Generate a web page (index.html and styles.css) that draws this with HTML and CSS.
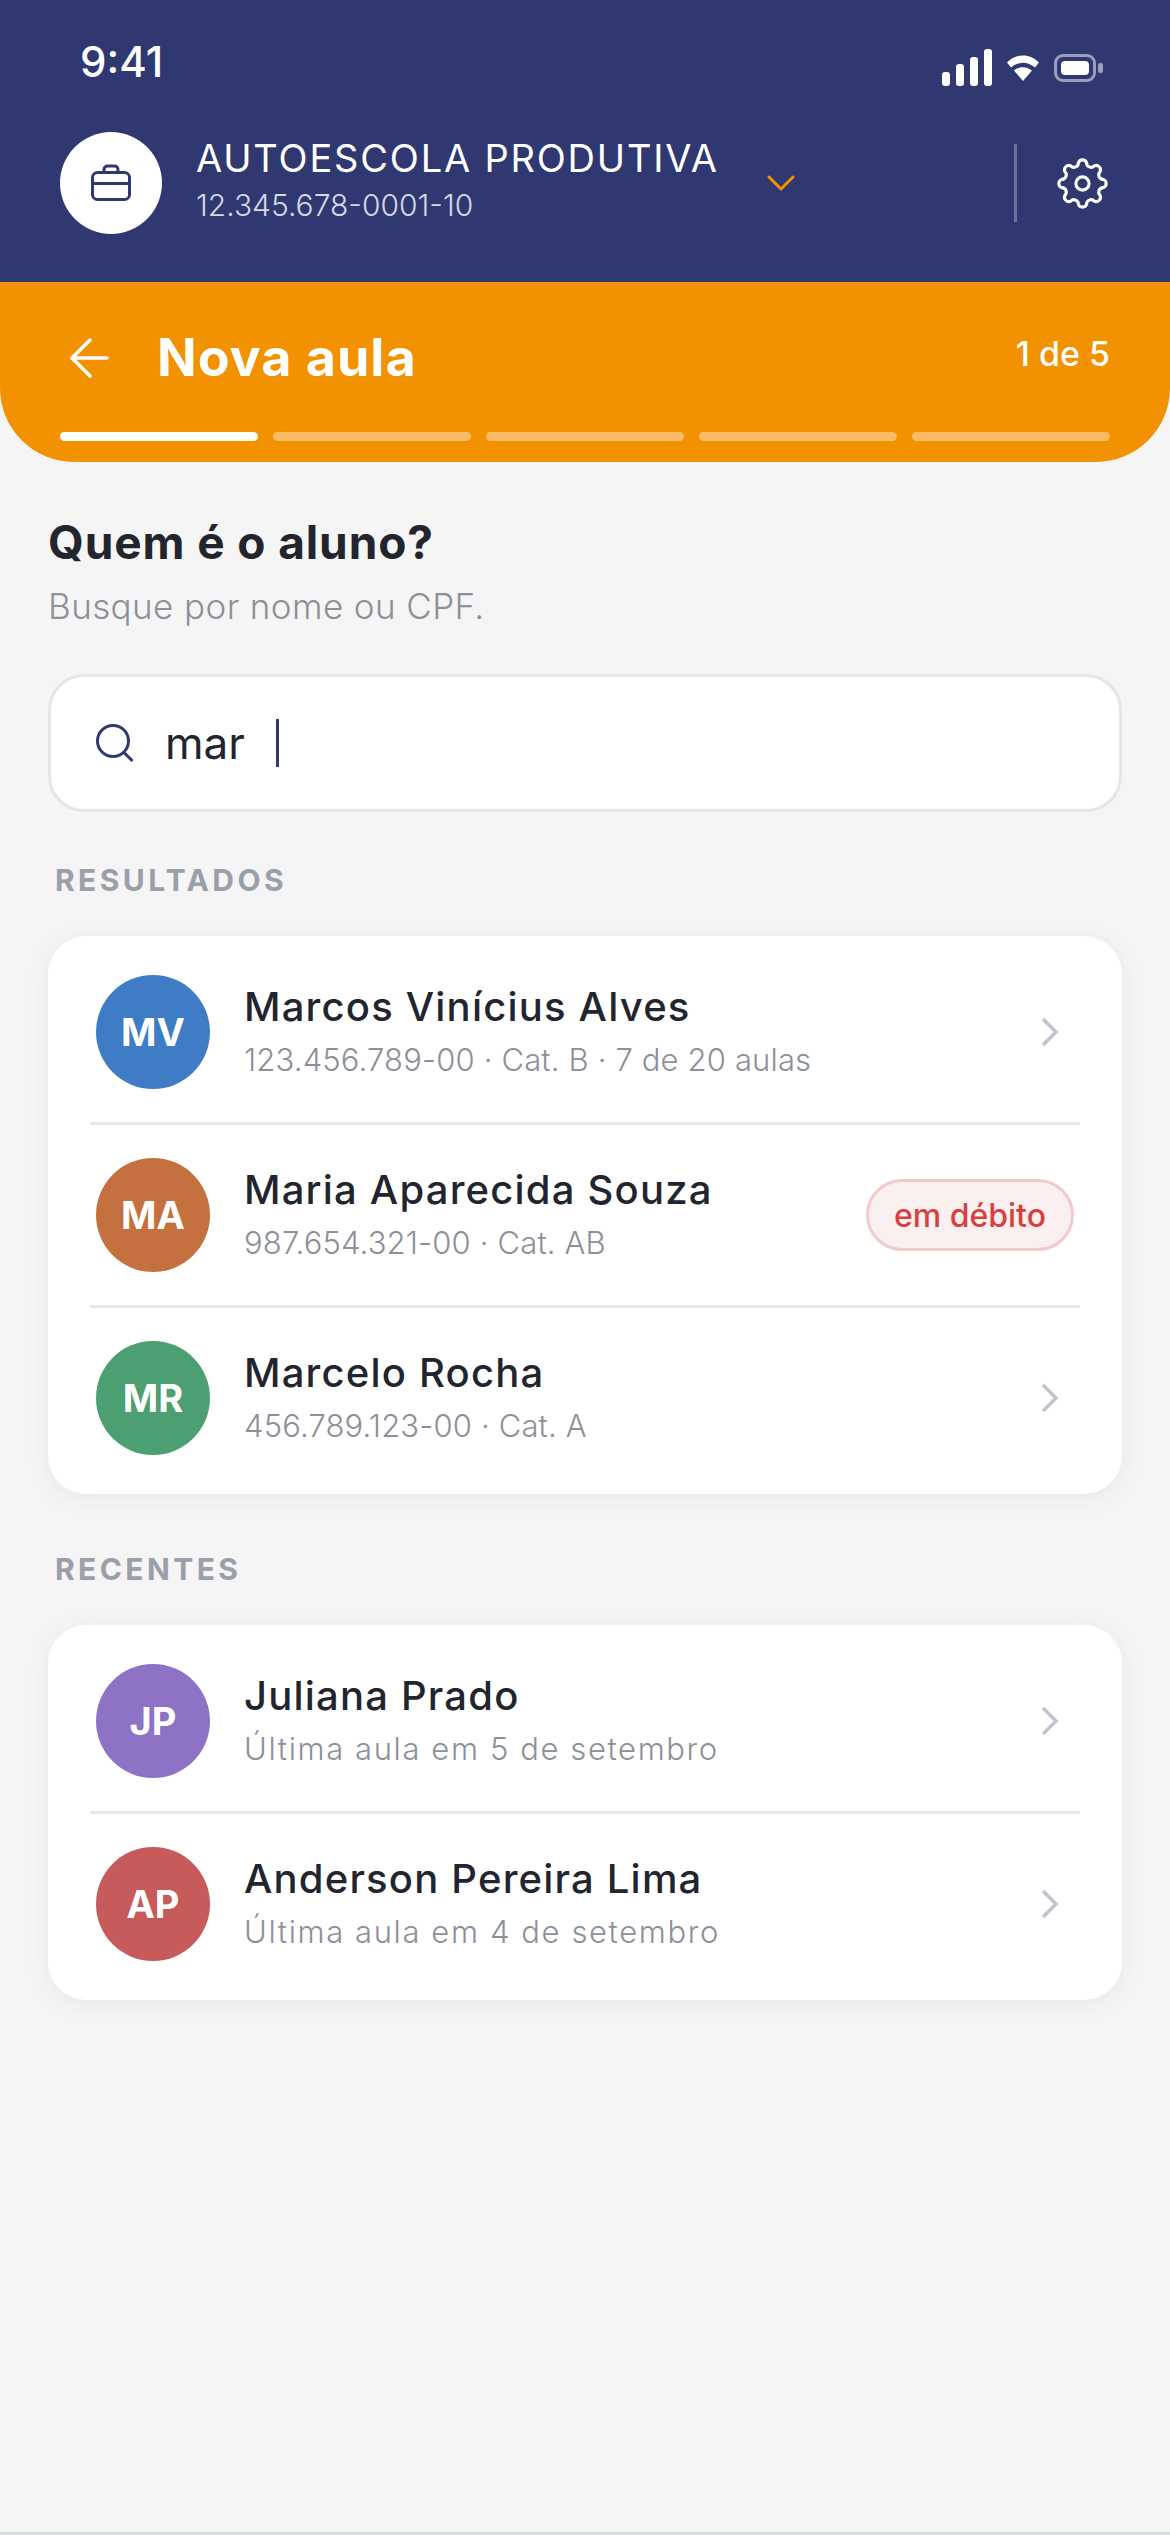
FILE: index.html
```html
<!DOCTYPE html>
<html lang="pt-BR">
<head>
    <title>Nova aula</title>
    <meta charset="UTF-8">
    <meta name="viewport" content="width=device-width, initial-scale=1.0">
    <link rel="stylesheet" href="styles.css">
</head>
<body>
    <header class="topbar">
        <div class="status">
            <span class="time">9:41</span>
            <div class="status-icons">
                <div class="signal">
                    <span class="signal-bar bar-1"></span>
                    <span class="signal-bar bar-2"></span>
                    <span class="signal-bar bar-3"></span>
                    <span class="signal-bar bar-4"></span>
                </div>
                <svg class="wifi" width="32" height="26" viewBox="0 0 32 26">
                    <path d="M0 7.5C9-2 23-2 32 7.5l-4 5C20.500 6 11.500 6 4 12.500z" fill="#fff"/>
                    <path d="M7 15.500c5.500-4.500 12.500-4.500 18 0L16 26z" fill="#fff"/>
                </svg>
                <div class="battery">
                    <span class="battery-fill"></span>
                </div>
                <span class="battery-nub"></span>
            </div>
        </div>
        <div class="account">
            <div class="account-logo">
                <svg width="42" height="38" viewBox="0 0 42 38" fill="none" stroke="#2f3870" stroke-width="3">
                    <rect x="2.500" y="8.500" width="37" height="27" rx="5"/>
                    <path d="M2.500 19.500h37"/>
                    <path d="M14 8V5.500a3.500 3.500 0 0 1 3.500-3.500h7a3.500 3.500 0 0 1 3.500 3.500V8"/>
                </svg>
            </div>
            <div class="account-text">
                <div class="account-name">AUTOESCOLA PRODUTIVA</div>
                <div class="account-doc">12.345.678-0001-10</div>
            </div>
            <svg class="account-caret" width="28" height="16" viewBox="0 0 28 16" fill="none" stroke="#f39200" stroke-width="3" stroke-linecap="round" stroke-linejoin="round">
                <path d="M2 2l12 12L26 2"/>
            </svg>
            <span class="account-divider"></span>
            <svg class="gear" width="53" height="53" viewBox="0 0 24 24" fill="none" stroke="#fff" stroke-width="1.400">
                <path d="M10.130 2.580A2 2 0 0 1 13.870 2.580A2 2 0 0 0 17.330 4.020A2 2 0 0 1 19.980 6.670A2 2 0 0 0 21.420 10.130A2 2 0 0 1 21.420 13.870A2 2 0 0 0 19.980 17.330A2 2 0 0 1 17.330 19.980A2 2 0 0 0 13.870 21.420A2 2 0 0 1 10.130 21.420A2 2 0 0 0 6.670 19.980A2 2 0 0 1 4.020 17.330A2 2 0 0 0 2.580 13.870A2 2 0 0 1 2.580 10.130A2 2 0 0 0 4.020 6.670A2 2 0 0 1 6.670 4.020A2 2 0 0 0 10.130 2.580Z"/>
                <circle cx="12" cy="12" r="3"/>
            </svg>
        </div>
    </header>

    <section class="steps">
        <div class="steps-head">
            <svg class="back" width="39" height="40" viewBox="0 0 39 40" fill="none" stroke="#fff" stroke-width="3.500" stroke-linecap="round" stroke-linejoin="round">
                <path d="M37 20H2"/>
                <path d="M20 2L2 20l18 18"/>
            </svg>
            <h1 class="steps-title">Nova aula</h1>
            <span class="steps-count">1 de 5</span>
        </div>
        <div class="progress">
            <span class="progress-bar done"></span>
            <span class="progress-bar"></span>
            <span class="progress-bar"></span>
            <span class="progress-bar"></span>
            <span class="progress-bar"></span>
        </div>
    </section>

    <main class="content">
        <h2 class="question">Quem é o aluno?</h2>
        <p class="hint">Busque por nome ou CPF.</p>

        <div class="search">
            <svg class="search-icon" width="38" height="38" viewBox="0 0 38 38" fill="none" stroke="#2f3870" stroke-width="3">
                <circle cx="17" cy="17" r="15.500"/>
                <path d="M27.500 28l9 9"/>
            </svg>
            <span class="search-value">mar</span>
            <span class="caret"></span>
        </div>

        <div class="section-label">RESULTADOS</div>
        <div class="card">
            <div class="row">
                <div class="avatar blue">MV</div>
                <div class="row-text">
                    <div class="row-name">Marcos Vinícius Alves</div>
                    <div class="row-sub">123.456.789-00 · Cat. B · 7 de 20 aulas</div>
                </div>
                <svg class="row-arrow" width="18" height="30" viewBox="0 0 18 30" fill="none" stroke="#c0c4cc" stroke-width="3.500"><path d="M2 2l13 13L2 28"/></svg>
            </div>
            <div class="row">
                <div class="avatar orange">MA</div>
                <div class="row-text">
                    <div class="row-name">Maria Aparecida Souza</div>
                    <div class="row-sub">987.654.321-00 · Cat. AB</div>
                </div>
                <span class="pill">em débito</span>
            </div>
            <div class="row">
                <div class="avatar green">MR</div>
                <div class="row-text">
                    <div class="row-name">Marcelo Rocha</div>
                    <div class="row-sub">456.789.123-00 · Cat. A</div>
                </div>
                <svg class="row-arrow" width="18" height="30" viewBox="0 0 18 30" fill="none" stroke="#c0c4cc" stroke-width="3.500"><path d="M2 2l13 13L2 28"/></svg>
            </div>
        </div>

        <div class="section-label recent">RECENTES</div>
        <div class="card">
            <div class="row">
                <div class="avatar purple">JP</div>
                <div class="row-text">
                    <div class="row-name">Juliana Prado</div>
                    <div class="row-sub last-class">Última aula em 5 de setembro</div>
                </div>
                <svg class="row-arrow" width="18" height="30" viewBox="0 0 18 30" fill="none" stroke="#c0c4cc" stroke-width="3.500"><path d="M2 2l13 13L2 28"/></svg>
            </div>
            <div class="row">
                <div class="avatar red">AP</div>
                <div class="row-text">
                    <div class="row-name">Anderson Pereira Lima</div>
                    <div class="row-sub last-class">Última aula em 4 de setembro</div>
                </div>
                <svg class="row-arrow" width="18" height="30" viewBox="0 0 18 30" fill="none" stroke="#c0c4cc" stroke-width="3.500"><path d="M2 2l13 13L2 28"/></svg>
            </div>
        </div>
    </main>

    <div class="bottom-line"></div>
</body>
</html>
```

FILE: styles.css
```css
* {
    box-sizing: border-box;
}
html, body {
    height: 100%;
}
body {
    margin: 0;
    min-height: 2535px;
    display: flex;
    flex-direction: column;
    background: #f5f5f5;
    font-family: "Inter", "Noto Sans", sans-serif;
    color: #22252e;
    overflow: hidden;
}

/* navy header */
.topbar {
    height: 282px;
    background: #2f3870;
    color: white;
}
.status {
    height: 132px;
    padding: 42px 67px 0 80px;
    display: flex;
    justify-content: space-between;
    align-items: flex-start;
}
.time {
    font-size: 42px;
    line-height: 40px;
    font-weight: 500;
}
.status-icons {
    display: flex;
    align-items: center;
    margin-top: 7px;
}
.signal {
    display: flex;
    align-items: flex-end;
    gap: 6px;
    height: 37px;
}
.signal-bar {
    width: 8px;
    background: white;
    border-radius: 3px;
}
.bar-1 { height: 14px; }
.bar-2 { height: 22px; }
.bar-3 { height: 29px; }
.bar-4 { height: 37px; }
.wifi {
    margin-left: 15px;
}
.battery {
    width: 42px;
    height: 28px;
    margin-left: 15px;
    padding: 4px;
    border: 3px solid #9a9eb9;
    border-radius: 9px;
}
.battery-fill {
    display: block;
    height: 100%;
    background: white;
    border-radius: 4px;
}
.battery-nub {
    width: 5px;
    height: 10px;
    margin-left: 2px;
    background: #9a9eb9;
    border-radius: 2px;
}
.account {
    display: flex;
    align-items: center;
    padding: 0 61px 0 60px;
}
.account-logo {
    width: 102px;
    height: 102px;
    border-radius: 50%;
    background: white;
    display: flex;
    align-items: center;
    justify-content: center;
}
.account-text {
    margin: -9px 0 0 34px;
}
.account-name {
    font-size: 38px;
    line-height: 46px;
    letter-spacing: 1.800px;
}
.account-doc {
    margin-top: 6px;
    font-size: 30px;
    line-height: 36px;
    font-weight: 300;
    color: #d5d8e6;
}
.account-caret {
    margin-left: 48px;
}
.account-divider {
    width: 3px;
    height: 78px;
    margin-left: auto;
    background: #6a719b;
}
.gear {
    margin-left: 39px;
}

/* orange step header */
.steps {
    height: 180px;
    padding: 50px 60px 0;
    background: #f39200;
    border-radius: 0 0 74px 74px;
    color: white;
}
.steps-head {
    display: flex;
    align-items: center;
    height: 52px;
}
.back {
    margin-left: 10px;
}
.steps-title {
    margin: 0 0 0 48px;
    font-size: 52px;
    line-height: 52px;
    font-weight: 700;
    letter-spacing: 1px;
}
.steps-count {
    margin-left: auto;
    margin-bottom: 10px;
    font-size: 34px;
    font-weight: 500;
}
.progress {
    display: flex;
    gap: 15px;
    margin-top: 48px;
}
.progress-bar {
    flex: 1;
    height: 9px;
    border-radius: 5px;
    background: #f8bc66;
}
.progress-bar.done {
    background: white;
}

/* page content */
.content {
    flex: 1;
    padding: 0 48px;
}
.question {
    margin: 52px 0 0;
    font-size: 46px;
    line-height: 56px;
    font-weight: 700;
    letter-spacing: 0.900px;
}
.hint {
    margin: 14px 0 0;
    font-size: 35px;
    line-height: 44px;
    font-weight: 300;
    letter-spacing: 0.400px;
    color: #8c9099;
}
.search {
    display: flex;
    align-items: center;
    height: 138px;
    margin-top: 46px;
    padding-left: 45px;
    background: white;
    border: 3px solid #e4e6ea;
    border-radius: 36px;
}
.search-value {
    margin-left: 31px;
    font-size: 44px;
    line-height: 48px;
}
.caret {
    width: 3px;
    height: 48px;
    margin-left: 31px;
    background: #2f3870;
}
.section-label {
    margin: 50px 0 0 7px;
    font-size: 30px;
    line-height: 36px;
    font-weight: 700;
    letter-spacing: 3.400px;
    color: #9aa0a9;
}
.section-label.recent {
    margin-top: 57px;
}
.card {
    margin-top: 38px;
    padding: 6px 42px;
    background: white;
    border-radius: 38px;
    box-shadow: 0 4px 24px rgba(0, 0, 0, 0.06);
}
.row {
    display: flex;
    align-items: center;
    padding: 33px 6px;
}
.row + .row {
    border-top: 3px solid #e8e8ee;
}
.avatar {
    flex: none;
    width: 114px;
    height: 114px;
    border-radius: 50%;
    display: flex;
    align-items: center;
    justify-content: center;
    color: white;
    font-size: 38px;
    font-weight: 700;
}
.blue { background: #3f7cc6; }
.orange { background: #c4713f; }
.green { background: #4c9f70; }
.purple { background: #8e72c6; }
.red { background: #c75b5b; }
.row-text {
    flex: 1;
    margin: -2px 0 0 34px;
}
.row-name {
    font-size: 40px;
    line-height: 50px;
    font-weight: 500;
    letter-spacing: 1.200px;
}
.row-sub {
    margin-top: 8px;
    font-size: 31px;
    line-height: 40px;
    font-weight: 300;
    letter-spacing: 0.150px;
    color: #8c9099;
}
.row-sub.last-class {
    letter-spacing: 1.600px;
}
.row-arrow {
    margin-right: 15px;
}
.pill {
    height: 72px;
    padding: 0 25px;
    display: flex;
    align-items: center;
    background: #fbf0f0;
    border: 3px solid #f3c9c9;
    border-radius: 36px;
    font-size: 32px;
    font-weight: 500;
    color: #d93f3f;
}
.bottom-line {
    height: 3px;
    background: #d9dce3;
}
```
